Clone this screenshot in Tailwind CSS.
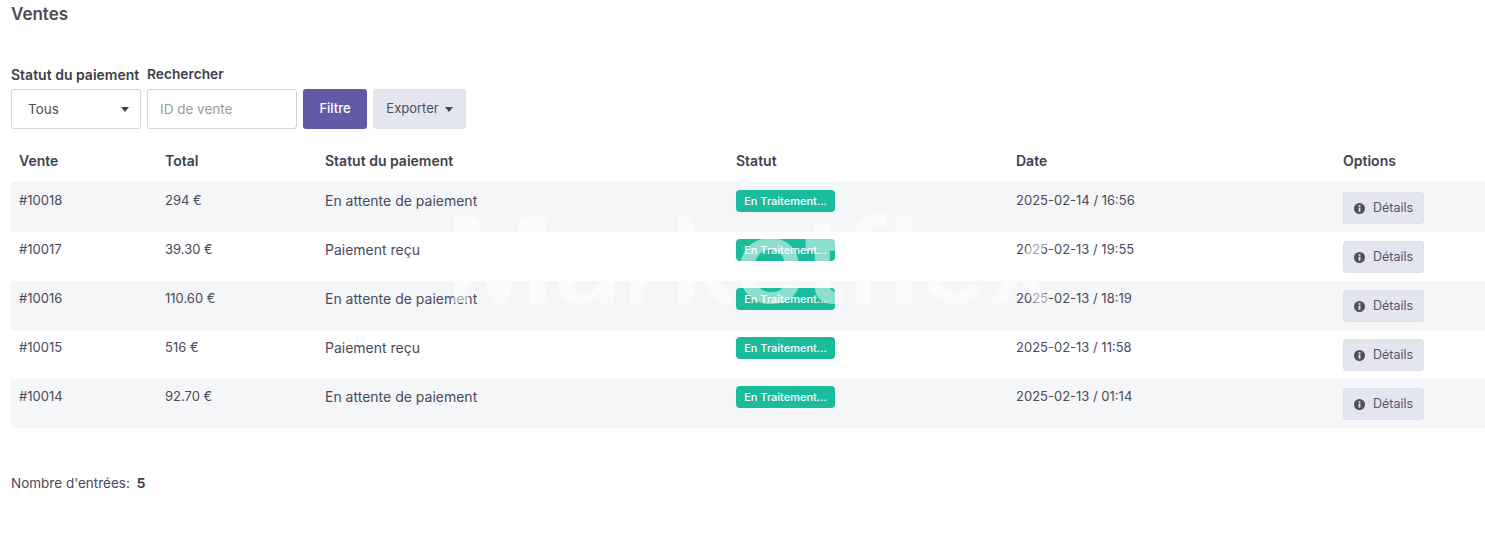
<!doctype html>
<html lang="fr"><head><meta charset="utf-8"><script src="https://cdn.jsdelivr.net/npm/@tailwindcss/browser@4"></script></head>
<body class="bg-white font-['Inter',sans-serif] text-[13px] text-[#4a4a5a] h-[535px] overflow-hidden relative">
<div class="pl-[11px] w-[1485px]">
<h1 class="h-[30px] pt-[4px] text-[17px] leading-[20px] font-semibold text-[#4d4d55]">Ventes</h1>
<div class="mt-[35px] flex gap-[6px] items-start">
  <div class="w-[130px]"><div class="h-[19px] text-[14px] leading-[19px] font-semibold text-[#3f3f4a] whitespace-nowrap">Statut du paiement</div>
    <div class="mt-[5px] h-[40px] border border-[#ced4e0] rounded-[3px] flex items-center justify-between pl-[16px] pr-[11px] text-[13.5px] leading-[18px] text-[#4d4d55]">Tous <svg width="8" height="5" viewBox="0 0 8 5"><path d="M0 0h8L4 5z" fill="#44444f"/></svg></div></div>
  <div class="w-[150px]"><div class="h-[19px] text-[13.75px] leading-[19px] font-semibold text-[#3f3f4a]">Rechercher</div>
    <div class="mt-[5px] h-[40px] border border-[#ced4e0] rounded-[3px] flex items-center pl-[12px] text-[13.5px] leading-[18px] text-[#9a9a9a]">ID de vente</div></div>
  <div class="mt-[24px] w-[64px] h-[40px] bg-[#625aa6] text-white rounded-[3px] flex items-center justify-center font-medium">Filtre</div>
  <div class="mt-[24px] w-[93px] h-[40px] bg-[#e4e6ef] border border-[#dfe2ec] rounded-[3px] flex items-center justify-center gap-[6px] text-[#4d4d5c]">Exporter <svg width="8" height="5" viewBox="0 0 8 5"><path d="M0 0h8L4 5z" fill="#44444f"/></svg></div>
</div>
<table class="mt-[10px] w-[1474px] table-fixed border-separate border-spacing-0">
  <colgroup><col class="w-[146px]"><col class="w-[160px]"><col class="w-[411px]"><col class="w-[280px]"><col class="w-[327px]"><col class="w-[150px]"></colgroup>
  <thead><tr class="h-[43px] text-left text-[#3f3f4f]">
    <th class="pl-[8px] pt-[1px] text-[14px] leading-[20px] font-semibold">Vente</th><th class="pl-[8px] pt-[1px] text-[14px] leading-[20px] font-semibold">Total</th><th class="pl-[8px] pt-[1px] text-[14px] leading-[20px] font-semibold">Statut du paiement</th><th class="pl-[8px] pt-[1px] text-[14px] leading-[20px] font-semibold">Statut</th><th class="pl-[8px] pt-[1px] text-[14px] leading-[20px] font-semibold">Date</th><th class="pl-[8px] pt-[1px] text-[14px] leading-[20px] font-semibold">Options</th>
  </tr></thead>
  <tbody>
    <tr class="h-[50px] bg-[#f5f6f8] align-top">
      <td class="border-t border-[#f0f1f4] pl-[8px] pt-[8px] leading-[19px]">#10018</td><td class="border-t border-[#f0f1f4] pl-[8px] pt-[8px] leading-[19px]">294 €</td><td class="border-t border-[#f0f1f4] pl-[8px] pt-[8px] leading-[19px] text-[14px]">En attente de paiement</td>
      <td class="border-t border-[#f0f1f4] pl-[8px] pt-[7px]"><span class="inline-flex w-[99px] h-[22px] items-center justify-center rounded-[4px] bg-[#1abc9c] text-white text-[11px] font-medium">En Traitement...</span></td>
      <td class="border-t border-[#f0f1f4] pl-[8px] pt-[8px] leading-[19px]">2025-02-14 / 16:56</td>
      <td class="border-t border-[#f0f1f4] pl-[8px] pt-[9px]"><span class="inline-flex w-[81px] h-[32px] items-center justify-center gap-[8px] rounded-[3px] bg-[#e4e6ef] border border-[#dfe2ec] text-[12.5px] text-[#55556a]"><svg width="11" height="11" viewBox="0 0 12 12"><circle cx="6" cy="6" r="6" fill="#4f4f5e"/><rect x="5" y="5" width="2" height="4.5" fill="#e4e6ef"/><rect x="5" y="2.3" width="2" height="1.8" fill="#e4e6ef"/></svg>Détails</span></td>
    </tr>
    <tr class="h-[49px] bg-white align-top">
      <td class="pl-[8px] pt-[8px] leading-[19px]">#10017</td><td class="pl-[8px] pt-[8px] leading-[19px]">39.30 €</td><td class="pl-[8px] pt-[8px] leading-[19px] text-[14px]">Paiement reçu</td>
      <td class="pl-[8px] pt-[7px]"><span class="inline-flex w-[99px] h-[22px] items-center justify-center rounded-[4px] bg-[#1abc9c] text-white text-[11px] font-medium">En Traitement...</span></td>
      <td class="pl-[8px] pt-[8px] leading-[19px]">2025-02-13 / 19:55</td>
      <td class="pl-[8px] pt-[9px]"><span class="inline-flex w-[81px] h-[32px] items-center justify-center gap-[8px] rounded-[3px] bg-[#e4e6ef] border border-[#dfe2ec] text-[12.5px] text-[#55556a]"><svg width="11" height="11" viewBox="0 0 12 12"><circle cx="6" cy="6" r="6" fill="#4f4f5e"/><rect x="5" y="5" width="2" height="4.5" fill="#e4e6ef"/><rect x="5" y="2.3" width="2" height="1.8" fill="#e4e6ef"/></svg>Détails</span></td>
    </tr>
    <tr class="h-[49px] bg-[#f5f6f8] align-top">
      <td class="pl-[8px] pt-[8px] leading-[19px]">#10016</td><td class="pl-[8px] pt-[8px] leading-[19px]">110.60 €</td><td class="pl-[8px] pt-[8px] leading-[19px] text-[14px]">En attente de paiement</td>
      <td class="pl-[8px] pt-[7px]"><span class="inline-flex w-[99px] h-[22px] items-center justify-center rounded-[4px] bg-[#1abc9c] text-white text-[11px] font-medium">En Traitement...</span></td>
      <td class="pl-[8px] pt-[8px] leading-[19px]">2025-02-13 / 18:19</td>
      <td class="pl-[8px] pt-[9px]"><span class="inline-flex w-[81px] h-[32px] items-center justify-center gap-[8px] rounded-[3px] bg-[#e4e6ef] border border-[#dfe2ec] text-[12.5px] text-[#55556a]"><svg width="11" height="11" viewBox="0 0 12 12"><circle cx="6" cy="6" r="6" fill="#4f4f5e"/><rect x="5" y="5" width="2" height="4.5" fill="#e4e6ef"/><rect x="5" y="2.3" width="2" height="1.8" fill="#e4e6ef"/></svg>Détails</span></td>
    </tr>
    <tr class="h-[49px] bg-white align-top">
      <td class="pl-[8px] pt-[8px] leading-[19px]">#10015</td><td class="pl-[8px] pt-[8px] leading-[19px]">516 €</td><td class="pl-[8px] pt-[8px] leading-[19px] text-[14px]">Paiement reçu</td>
      <td class="pl-[8px] pt-[7px]"><span class="inline-flex w-[99px] h-[22px] items-center justify-center rounded-[4px] bg-[#1abc9c] text-white text-[11px] font-medium">En Traitement...</span></td>
      <td class="pl-[8px] pt-[8px] leading-[19px]">2025-02-13 / 11:58</td>
      <td class="pl-[8px] pt-[9px]"><span class="inline-flex w-[81px] h-[32px] items-center justify-center gap-[8px] rounded-[3px] bg-[#e4e6ef] border border-[#dfe2ec] text-[12.5px] text-[#55556a]"><svg width="11" height="11" viewBox="0 0 12 12"><circle cx="6" cy="6" r="6" fill="#4f4f5e"/><rect x="5" y="5" width="2" height="4.5" fill="#e4e6ef"/><rect x="5" y="2.3" width="2" height="1.8" fill="#e4e6ef"/></svg>Détails</span></td>
    </tr>
    <tr class="h-[49px] bg-[#f5f6f8] align-top">
      <td class="pl-[8px] pt-[8px] leading-[19px]">#10014</td><td class="pl-[8px] pt-[8px] leading-[19px]">92.70 €</td><td class="pl-[8px] pt-[8px] leading-[19px] text-[14px]">En attente de paiement</td>
      <td class="pl-[8px] pt-[7px]"><span class="inline-flex w-[99px] h-[22px] items-center justify-center rounded-[4px] bg-[#1abc9c] text-white text-[11px] font-medium">En Traitement...</span></td>
      <td class="pl-[8px] pt-[8px] leading-[19px]">2025-02-13 / 01:14</td>
      <td class="pl-[8px] pt-[9px]"><span class="inline-flex w-[81px] h-[32px] items-center justify-center gap-[8px] rounded-[3px] bg-[#e4e6ef] border border-[#dfe2ec] text-[12.5px] text-[#55556a]"><svg width="11" height="11" viewBox="0 0 12 12"><circle cx="6" cy="6" r="6" fill="#4f4f5e"/><rect x="5" y="5" width="2" height="4.5" fill="#e4e6ef"/><rect x="5" y="2.3" width="2" height="1.8" fill="#e4e6ef"/></svg>Détails</span></td>
    </tr>
  </tbody>
</table>
<div class="mt-[46px] text-[13.5px] leading-[19px]">Nombre d'entrées: <b class="ml-[3px] font-bold text-[#3f3f4f]">5</b></div>
</div>
<div class="absolute left-[445px] top-[195px] text-[118px] leading-[130px] font-semibold text-white/50 whitespace-nowrap pointer-events-none">Marketflex</div>
</body></html>
